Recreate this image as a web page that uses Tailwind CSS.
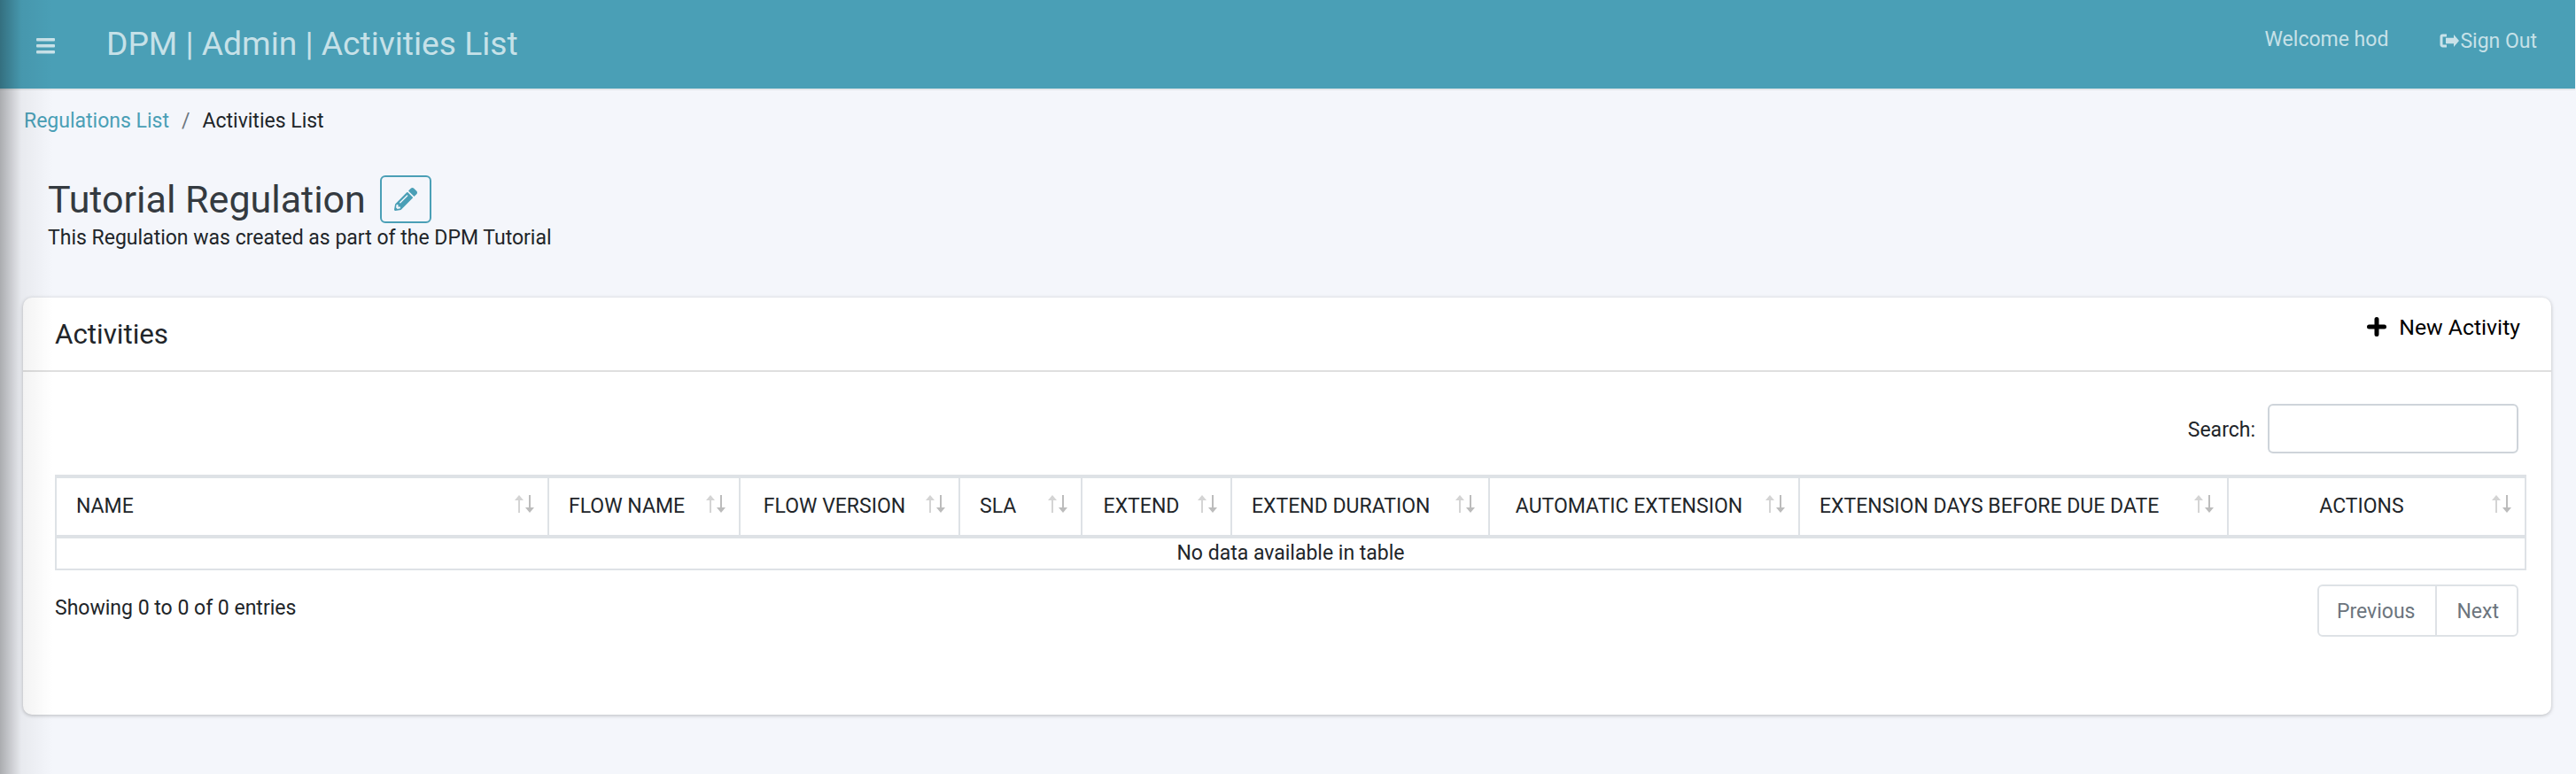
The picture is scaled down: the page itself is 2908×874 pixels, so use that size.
<!DOCTYPE html>
<html lang="en">
<head>
<meta charset="utf-8">
<title>DPM | Admin | Activities List</title>
<script src="https://cdn.jsdelivr.net/npm/@tailwindcss/browser@4"></script>
</head>
<body class="relative h-[874px] w-[2908px] overflow-hidden bg-[#f4f6fb] font-[Roboto,sans-serif] text-[23px] leading-[28px] text-[#212529]">
<div class="pointer-events-none absolute inset-y-0 left-0 z-10 w-[60px] bg-gradient-to-r from-black/30 via-black/5 via-40% to-transparent"></div>

<header class="mr-px flex h-[102px] items-start border-b-2 border-[#e3e6ea] bg-[#4a9fb6] pl-[41px] pr-[43px] text-white/70">
  <svg class="mt-[43px] h-[18px] w-[21px]" viewBox="0 0 21 18" fill="currentColor"><rect y="0" width="21" height="3.5" rx="1"/><rect y="7" width="21" height="3.5" rx="1"/><rect y="14" width="21" height="3.5" rx="1"/></svg>
  <h1 class="ml-[58px] mt-[27px] text-[37.2px] leading-[44px]">DPM | Admin | Activities List</h1>
  <span class="ml-auto mt-[31px]">Welcome hod</span>
  <a class="ml-[58px] mt-[30px] flex items-center" href="#">
    <svg class="h-[16px] w-[23px]" viewBox="0 0 23 16" fill="currentColor"><path d="M8 2H3.5A1.5 1.5 0 0 0 2 3.5v9A1.5 1.5 0 0 0 3.5 14H8" fill="none" stroke="currentColor" stroke-width="3"/><path d="M7 4.7h9V1l6 7-6 7v-3.7H7z"/></svg>
    <span class="pt-[3px]">Sign Out</span>
  </a>
</header>

<main>
  <nav class="ml-[27px] mt-[21px] flex">
    <a class="text-[#4a9fb6]" href="#">Regulations List</a>
    <span class="mx-[14px] text-[#6c757d]">/</span>
    <span>Activities List</span>
  </nav>

  <section class="ml-[54px] mt-[47px]">
    <div class="flex items-center gap-[16px]">
      <h2 class="text-[43px] leading-[54px] text-[#343a40]">Tutorial Regulation</h2>
      <button class="flex h-[54px] w-[58px] items-center justify-center rounded-[6px] border-2 border-[#4a9fb6] text-[#4a9fb6]">
        <svg class="h-[26px] w-[26px]" viewBox="0 0 512 512" fill="currentColor"><path d="M497.9 142.1l-46.1 46.1c-4.7 4.7-12.3 4.7-17 0l-111-111c-4.7-4.7-4.7-12.3 0-17l46.1-46.1c18.7-18.7 49.1-18.7 67.9 0l60.1 60.1c18.8 18.7 18.8 49.1 0 67.9zM284.2 99.8L21.6 362.4.4 483.9c-2.9 16.4 11.4 30.6 27.8 27.8l121.5-21.3 262.6-262.6c4.3-4.3 4.3-11.3 0-15.6l-108.5-108.5c-4.4-4.3-11.5-4.3-15.7 0zM124.1 339.9c-5.5-5.5-5.5-14.3 0-19.8l154-154c5.5-5.5 14.3-5.5 19.8 0s5.5 14.3 0 19.8l-154 154c-5.5 5.5-14.3 5.5-19.8 0zM88 424h48v36.3l-64.5 11.3-31.1-31.1L51.7 376H88v48z"/></svg>
      </button>
    </div>
    <p class="mt-[3px]">This Regulation was created as part of the DPM Tutorial</p>
  </section>

  <section class="ml-[26px] mt-[53px] h-[471px] w-[2854px] rounded-[10px] bg-white shadow-[0_1px_4px_rgba(0,0,0,0.25)]">
    <div class="flex h-[84px] items-start justify-between border-b-2 border-[#dfdfdf] pl-[36px] pr-[35px]">
      <h3 class="mt-[23px] text-[31.3px] leading-[38px]">Activities</h3>
      <a class="mt-[17px] flex items-center gap-[14px] text-[24.8px] leading-[28px] text-black" href="#">
        <svg class="h-[22px] w-[22px]" viewBox="0 0 22 22" fill="none" stroke="currentColor" stroke-width="5" stroke-linecap="round"><path d="M11 2.5v17M2.5 11h17"/></svg>
        <span class="pt-[3px]">New Activity</span>
      </a>
    </div>
    <div class="pl-[36px] pr-[37px] pt-[36px]">
      <div class="flex items-center justify-end gap-[14px]">
        <label class="mt-[4px]" for="search">Search:</label>
        <input id="search" class="h-[56px] w-[283px] rounded-[6px] border-2 border-[#ced4da] bg-white" type="search">
      </div>
      <table class="mt-[24px] w-[2790px] table-fixed border-separate border-spacing-0 text-[#212529]">
        <colgroup>
          <col class="w-[558px]"><col class="w-[216px]"><col class="w-[248px]"><col class="w-[138px]"><col class="w-[169px]"><col class="w-[291px]"><col class="w-[350px]"><col class="w-[484px]"><col class="w-[336px]">
        </colgroup>
        <thead>
          <tr class="h-[72px]">
            <th class="relative border-y-4 border-x-2 border-[#dee2e6] pl-[22px] text-left font-normal">NAME
              <svg class="absolute right-[14px] top-[19px] h-[20px] w-[23px]" viewBox="0 0 23 20"><path d="M4 20V6H0l5-6 5 6H6v14z" fill="#d4d4d4"/><path d="M16 0v14h-4l5 6 5-6h-4V0z" fill="#bcbcbc"/></svg></th>
            <th class="relative border-y-4 border-r-2 border-[#dee2e6] pl-[22px] text-left font-normal">FLOW NAME
              <svg class="absolute right-[14px] top-[19px] h-[20px] w-[23px]" viewBox="0 0 23 20"><path d="M4 20V6H0l5-6 5 6H6v14z" fill="#d4d4d4"/><path d="M16 0v14h-4l5 6 5-6h-4V0z" fill="#bcbcbc"/></svg></th>
            <th class="relative border-y-4 border-r-2 border-[#dee2e6] pl-[22px] pr-[56px] text-center font-normal">FLOW VERSION
              <svg class="absolute right-[14px] top-[19px] h-[20px] w-[23px]" viewBox="0 0 23 20"><path d="M4 20V6H0l5-6 5 6H6v14z" fill="#d4d4d4"/><path d="M16 0v14h-4l5 6 5-6h-4V0z" fill="#bcbcbc"/></svg></th>
            <th class="relative border-y-4 border-r-2 border-[#dee2e6] pl-[22px] text-left font-normal">SLA
              <svg class="absolute right-[14px] top-[19px] h-[20px] w-[23px]" viewBox="0 0 23 20"><path d="M4 20V6H0l5-6 5 6H6v14z" fill="#d4d4d4"/><path d="M16 0v14h-4l5 6 5-6h-4V0z" fill="#bcbcbc"/></svg></th>
            <th class="relative border-y-4 border-r-2 border-[#dee2e6] pl-[22px] pr-[56px] text-center font-normal">EXTEND
              <svg class="absolute right-[14px] top-[19px] h-[20px] w-[23px]" viewBox="0 0 23 20"><path d="M4 20V6H0l5-6 5 6H6v14z" fill="#d4d4d4"/><path d="M16 0v14h-4l5 6 5-6h-4V0z" fill="#bcbcbc"/></svg></th>
            <th class="relative border-y-4 border-r-2 border-[#dee2e6] pl-[22px] text-left font-normal">EXTEND DURATION
              <svg class="absolute right-[14px] top-[19px] h-[20px] w-[23px]" viewBox="0 0 23 20"><path d="M4 20V6H0l5-6 5 6H6v14z" fill="#d4d4d4"/><path d="M16 0v14h-4l5 6 5-6h-4V0z" fill="#bcbcbc"/></svg></th>
            <th class="relative border-y-4 border-r-2 border-[#dee2e6] pl-[22px] pr-[56px] text-center font-normal">AUTOMATIC EXTENSION
              <svg class="absolute right-[14px] top-[19px] h-[20px] w-[23px]" viewBox="0 0 23 20"><path d="M4 20V6H0l5-6 5 6H6v14z" fill="#d4d4d4"/><path d="M16 0v14h-4l5 6 5-6h-4V0z" fill="#bcbcbc"/></svg></th>
            <th class="relative border-y-4 border-r-2 border-[#dee2e6] pl-[22px] text-left font-normal">EXTENSION DAYS BEFORE DUE DATE
              <svg class="absolute right-[14px] top-[19px] h-[20px] w-[23px]" viewBox="0 0 23 20"><path d="M4 20V6H0l5-6 5 6H6v14z" fill="#d4d4d4"/><path d="M16 0v14h-4l5 6 5-6h-4V0z" fill="#bcbcbc"/></svg></th>
            <th class="relative border-y-4 border-r-2 border-[#dee2e6] pl-[22px] pr-[56px] text-center font-normal">ACTIONS
              <svg class="absolute right-[14px] top-[19px] h-[20px] w-[23px]" viewBox="0 0 23 20"><path d="M4 20V6H0l5-6 5 6H6v14z" fill="#d4d4d4"/><path d="M16 0v14h-4l5 6 5-6h-4V0z" fill="#bcbcbc"/></svg></th>
          </tr>
        </thead>
        <tbody>
          <tr class="h-[36px]">
            <td colspan="9" class="border-x-2 border-b-2 border-[#dee2e6] text-center">No data available in table</td>
          </tr>
        </tbody>
      </table>
      <div class="mt-[16px] flex items-start justify-between">
        <div class="mt-[13px]">Showing 0 to 0 of 0 entries</div>
        <div class="flex h-[59px] rounded-[6px] border-2 border-[#dee2e6] text-[#6c757d]">
          <a class="flex items-center border-r-2 border-[#dee2e6] pl-[20px] pr-[23px] pt-[2px]" href="#">Previous</a>
          <a class="flex items-center pl-[22px] pr-[20px] pt-[2px]" href="#">Next</a>
        </div>
      </div>
    </div>
  </section>
</main>
</body>
</html>
